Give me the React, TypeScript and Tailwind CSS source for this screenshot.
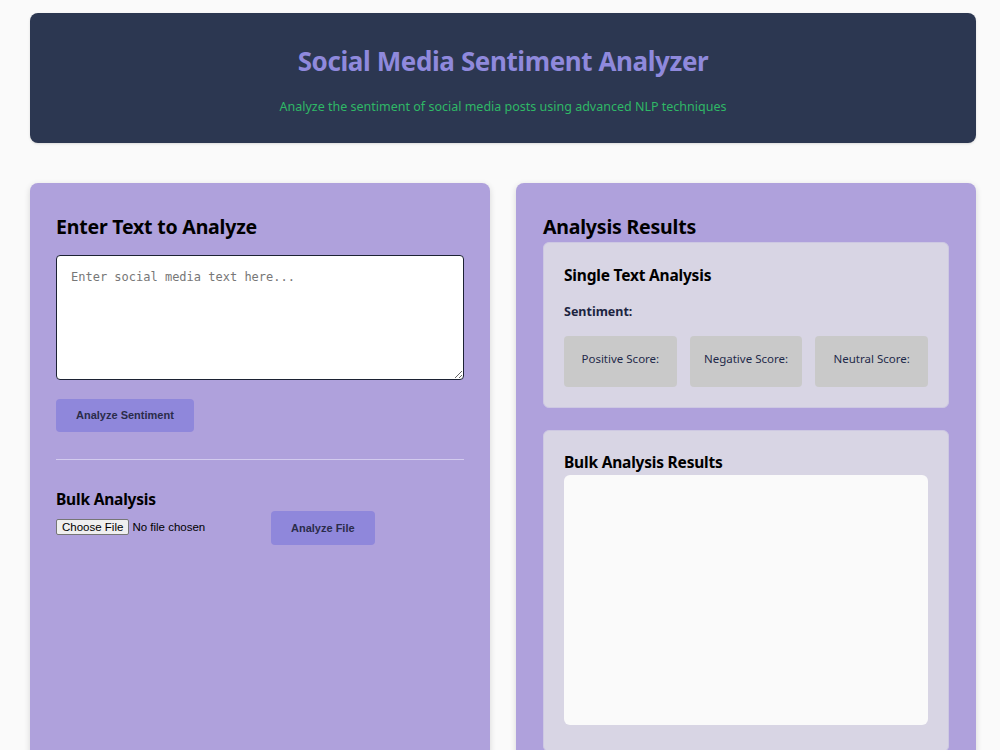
import React from 'react';

const ScoreBox = ({ label }: { label: string }) => (
  <div className="h-[51px] rounded-[4px] bg-[#c9c9c9] pt-[15px] text-center text-[11.5px] leading-[16px] text-[#1f2a4a]">
    {label}
  </div>
);

const App = () => {
  return (
    <div className="min-h-screen bg-[#fafafa] pl-[30px] pr-[24px] pt-[13px] font-['Noto_Sans',sans-serif]">
      {/* header */}
      <header className="flex h-[130px] flex-col items-center rounded-[8px] bg-[#2c3751] pt-[30px] shadow-sm">
        <h1 className="text-[26px] font-bold leading-[36px] tracking-[-0.4px] text-[#8f89dc]">
          Social Media Sentiment Analyzer
        </h1>
        <p className="mt-[19px] text-[12.5px] leading-[18px] text-[#2fb866]">
          Analyze the sentiment of social media posts using advanced NLP techniques
        </p>
      </header>

      <div className="mt-[40px] grid grid-cols-2 gap-[26px]">
        {/* input card */}
        <section className="rounded-[8px] bg-[#afa1dc] px-[26px] pb-[26px] pt-[30px] shadow-[0_2px_6px_rgba(0,0,0,0.15)]">
          <h2 className="text-[19.5px] font-bold leading-[28px] tracking-[-0.2px] text-black">Enter Text to Analyze</h2>
          <textarea
            placeholder="Enter social media text here..."
            className="mt-[14px] block h-[125px] w-full rounded-[4px] border border-[#1c2233] bg-white px-[14px] py-[13px] text-[12px] leading-[16px] placeholder:text-[#777]"
            style={{ fontFamily: '"DejaVu Sans Mono", "Liberation Mono", monospace' }}
          />
          <button
            className="mt-[19px] h-[33px] rounded-[4px] bg-[#8f87db] px-[20px] text-[11px] font-bold text-[#2a2c4a]"
            style={{ fontFamily: '"Liberation Sans", Arial, sans-serif' }}
          >
            Analyze Sentiment
          </button>
          <hr className="mt-[27px] border-t border-[#d3cbee]" />
          <h3 className="mt-[28px] text-[15.5px] font-bold leading-[22px] tracking-[-0.2px] text-black">Bulk Analysis</h3>
          <div className="mt-[1px] flex items-center gap-[8px]">
            <input
              type="file"
              className="w-[207px] text-[11.5px] text-black file:mr-[3px] file:h-[16px] file:rounded-[2px] file:border file:border-[#767676] file:bg-[#efefef] file:px-[5px] file:py-0 file:text-[11.5px] file:leading-[14px]"
              style={{ fontFamily: '"Liberation Sans", Arial, sans-serif' }}
            />
            <button
              className="h-[34px] rounded-[4px] bg-[#8f87db] px-[20px] text-[11px] font-bold text-[#2a2c4a]"
              style={{ fontFamily: '"Liberation Sans", Arial, sans-serif' }}
            >
              Analyze File
            </button>
          </div>
        </section>

        {/* results card */}
        <section className="rounded-[8px] bg-[#afa1dc] px-[27px] pb-[26px] pt-[30px] shadow-[0_2px_6px_rgba(0,0,0,0.15)]">
          <h2 className="text-[19.5px] font-bold leading-[28px] tracking-[-0.2px] text-black">Analysis Results</h2>
          <div className="mt-[1px] rounded-[6px] border border-[#cdc8e2] bg-[#d8d5e4] px-[20px] pb-[20px] pt-[21px]">
            <h3 className="text-[15.5px] font-bold leading-[22px] tracking-[-0.2px] text-black">Single Text Analysis</h3>
            <p className="mt-[17px] text-[12.5px] font-bold leading-[18px] text-[#1c2440]">Sentiment:</p>
            <div className="mt-[15px] grid grid-cols-3 gap-[13px]">
              <ScoreBox label="Positive Score:" />
              <ScoreBox label="Negative Score:" />
              <ScoreBox label="Neutral Score:" />
            </div>
          </div>
          <div className="mt-[22px] rounded-[6px] border border-[#cdc8e2] bg-[#d8d5e4] px-[20px] pb-[26px] pt-[20px]">
            <h3 className="text-[15.5px] font-bold leading-[22px] tracking-[-0.2px] text-black">Bulk Analysis Results</h3>
            <div className="mt-[2px] h-[250px] rounded-[6px] bg-[#fafafa]" />
          </div>
        </section>
      </div>
    </div>
  );
};

export default App;
